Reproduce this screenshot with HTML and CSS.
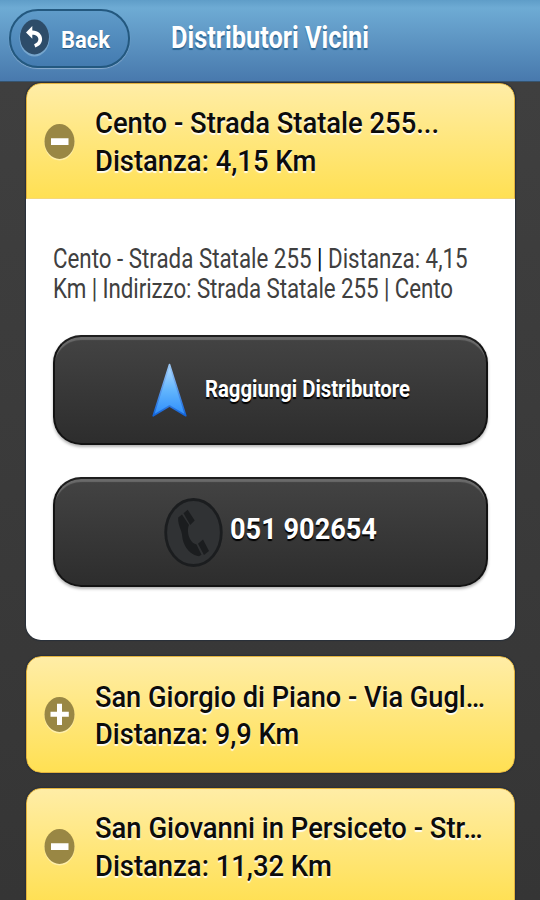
FILE: index.html
```
<!DOCTYPE html>
<html lang="it">
<head>
<meta charset="utf-8">
<title>Distributori Vicini</title>
<link rel="stylesheet" href="styles.css">
</head>
<body>
<header class="bar">
  <a class="back">
    <svg class="back-icon" width="32" height="38" viewBox="0 0 32 38">
      <ellipse cx="15.5" cy="19.5" rx="15" ry="18" fill="#86b2d6" opacity=".75"/>
      <ellipse cx="15.5" cy="18" rx="14.5" ry="17.5" fill="#2d4c69"/>
      <path d="M7 13.500 13.300 7v4.400c6 .1 9.800 4 9.800 8.600 0 4-2.400 7.100-6.800 8.400l-1.200-3.200c2.700-1 4.300-2.800 4.300-5 0-2.500-2.200-4.400-6.100-4.400v4z" fill="#fff"/>
    </svg>
    <span class="back-label">Back</span>
  </a>
  <h1 class="title">Distributori Vicini</h1>
</header>

<main class="list">
  <section class="card open">
    <h2 class="head">
      <svg class="toggle" width="32" height="38" viewBox="0 0 32 38">
        <ellipse cx="15.5" cy="19.7" rx="15" ry="17.7" fill="#fff" opacity=".4"/>
        <ellipse cx="15.5" cy="18.5" rx="15" ry="17.5" fill="#998744"/>
        <path d="M7 15.300h17.500v6.600H7z" fill="#fff"/>
      </svg>
      <span class="label">Cento - Strada Statale 255...<br>Distanza: 4,15 Km</span>
    </h2>
    <div class="content">
      <p class="info">Cento - Strada Statale 255 <b>|</b> Distanza: 4,15<br><span class="info-line">Km | Indirizzo: Strada Statale 255 | Cento</span></p>
      <a class="button">
        <svg class="arrow" width="38" height="56" viewBox="0 0 38 56">
          <defs>
            <linearGradient id="sky" x1="0" y1="0" x2="0" y2="1">
              <stop offset="0" stop-color="#b5dcff"/>
              <stop offset=".5" stop-color="#62b5fd"/>
              <stop offset="1" stop-color="#2d8dfa"/>
            </linearGradient>
            <linearGradient id="edge" x1="0" y1="0" x2="0" y2="1">
              <stop offset="0" stop-color="#9dc9f5"/>
              <stop offset="1" stop-color="#1263d8"/>
            </linearGradient>
          </defs>
          <path d="M18.500 2.500 34.800 53.800 18.500 44 2.200 53.800z" fill="url(#sky)" stroke="url(#edge)" stroke-width="1.600" stroke-linejoin="round"/>
        </svg>
        <span class="button-label">Raggiungi Distributore</span>
      </a>
      <a class="button call">
        <svg class="phone" width="60" height="70" viewBox="0 0 60 70">
          <ellipse cx="29.500" cy="35.500" rx="27.800" ry="33" fill="#303234" stroke="#1b1d1f" stroke-width="2.800"/>
          <path d="M14.200 20.500 18 17.500 25 28C23.500 31 23.500 37 26 42c1.500 3 4 5 6.500 5.500l5 10.200-2.500 1.500c-6-.5-12.500-5.500-15.500-14-1.500-4-1-7-2.300-11-2-5-3.500-9.500-3-13.700z" fill="#1b1d1f"/>
          <path d="m19.500 16.300 4.200-3.500 7 10.800-4.500 4.400z" fill="#1b1d1f"/>
          <path d="m34 46.800 5-4.300 6 11.500-5 4z" fill="#1b1d1f"/>
        </svg>
        <span class="button-label">051 902654</span>
      </a>
    </div>
  </section>

  <section class="card">
    <h2 class="head">
      <svg class="toggle" width="32" height="38" viewBox="0 0 32 38">
        <ellipse cx="15.500" cy="19.700" rx="15" ry="17.700" fill="#fff" opacity=".4"/>
        <ellipse cx="15.500" cy="18.500" rx="15" ry="17.500" fill="#998744"/>
        <path d="M6.500 15.800h6.500V7.700h5v8.100h6.800v5h-6.800V29h-5v-8.200H6.500z" fill="#fff"/>
      </svg>
      <span class="label">San Giorgio di Piano - Via Gugl…<br>Distanza: 9,9 Km</span>
    </h2>
  </section>

  <section class="card open">
    <h2 class="head">
      <svg class="toggle" width="32" height="38" viewBox="0 0 32 38">
        <ellipse cx="15.500" cy="19.700" rx="15" ry="17.700" fill="#fff" opacity=".4"/>
        <ellipse cx="15.500" cy="18.500" rx="15" ry="17.500" fill="#998744"/>
        <path d="M7 15.300h17.500v6.600H7z" fill="#fff"/>
      </svg>
      <span class="label">San Giovanni in Persiceto - Str…<br>Distanza: 11,32 Km</span>
    </h2>
  </section>
</main>
</body>
</html>
```
FILE: styles.css
```
* {
  box-sizing: border-box;
}

body {
  margin: 0;
  height: 900px;
  overflow: hidden;
  background: linear-gradient(#404040, #353535);
  font-family: Roboto, "Liberation Sans", sans-serif;
}

.bar {
  display: flex;
  align-items: flex-start;
  height: 82px;
  padding: 9px 0 0 9px;
  background: linear-gradient(#5f9dc8 0, #6eabd4 8px, #4879ad 100%);
  border-bottom: 1px solid #36546f;
}

.back {
  display: flex;
  align-items: center;
  width: 121px;
  height: 59px;
  padding-left: 8px;
  border: 2px solid #23587f;
  border-radius: 29px;
  background: linear-gradient(#5f9bc9, #447bb0);
  box-shadow: 0 1px 1px rgba(255, 255, 255, .35);
}

.back-icon {
  flex: none;
  margin-bottom: 1px;
}

.back-label,
.title,
.label,
.info,
.button-label {
  transform-origin: 0 50%;
  white-space: nowrap;
}

.back-label {
  margin: 2px 0 0 10px;
  font-size: 24px;
  font-weight: 700;
  line-height: 30px;
  color: #fff;
  text-shadow: 0 1px 1px #1d5078;
  transform: scaleX(.915);
}

.title {
  margin: 10px 0 0 41px;
  font-size: 31px;
  font-weight: 700;
  line-height: 38px;
  color: #fff;
  text-shadow: 0 2px 1px #2b6592;
  transform: scaleX(.817);
}

.list {
  display: flex;
  flex-direction: column;
  gap: 16px;
  height: 818px;
  overflow: hidden;
  padding: 1px 25px 0 26px;
}

.card {
  flex: none;
  border-radius: 15px;
  overflow: hidden;
  box-shadow: 0 0 1px 1px #28303a;
}

.card:last-child {
  flex: 1 1 0;
  min-height: 0;
  margin-top: -1px;
  border-radius: 15px 15px 0 0;
}

.head {
  display: flex;
  align-items: center;
  height: 117px;
  margin: 0;
  padding: 2px 0 0 17px;
  border: 1px solid #e3b23c;
  border-radius: 15px;
  background: linear-gradient(#ffeda6, #ffe053);
  font-size: 30px;
  font-weight: 500;
  line-height: 37.6px;
  color: #0c0c0c;
  text-shadow: 0 2px 1px rgba(255, 255, 255, .9);
}

.open .head {
  height: 116px;
  border-radius: 15px 15px 0 0;
  border-bottom-color: #f5d87a;
}

.toggle {
  flex: none;
}

.label {
  margin-left: 19px;
  transform: scaleX(.913);
}

.card:nth-child(2) .label {
  transform: scaleX(.906);
}

.content {
  display: flex;
  flex-direction: column;
  padding: 44px 27px 53px;
  background: #fff;
}

.info {
  margin: 0 0 31px;
  font-size: 27px;
  font-weight: 400;
  line-height: 30.4px;
  color: #404040;
  transform: translateY(.5px) scaleX(.827);
}

.info-line {
  letter-spacing: -.08px;
}

.info b {
  font-weight: 400;
  color: #000;
}

.button {
  display: flex;
  flex: none;
  align-items: center;
  height: 110px;
  padding-left: 96px;
  border: 2px solid #121212;
  border-top-color: #1e1e1e;
  border-radius: 28px;
  background: linear-gradient(#434343, #2d2d2d);
  box-shadow: inset 0 4px 1px -1px #6a6a6a, 0 2px 3px rgba(0, 0, 0, .3);
  color: #fff;
}

.button + .button {
  margin-top: 32px;
}

.arrow,
.phone {
  flex: none;
}

.button-label {
  margin: 0 0 2px 16px;
  font-size: 24px;
  font-weight: 700;
  line-height: 30px;
  text-shadow: 0 2px 1px #000;
  transform: scaleX(.846);
}

.call {
  padding-left: 109px;
}

.call .button-label {
  margin: 0 0 6px 6px;
  font-size: 30px;
  line-height: 38px;
  transform: scaleX(.905);
}
```
